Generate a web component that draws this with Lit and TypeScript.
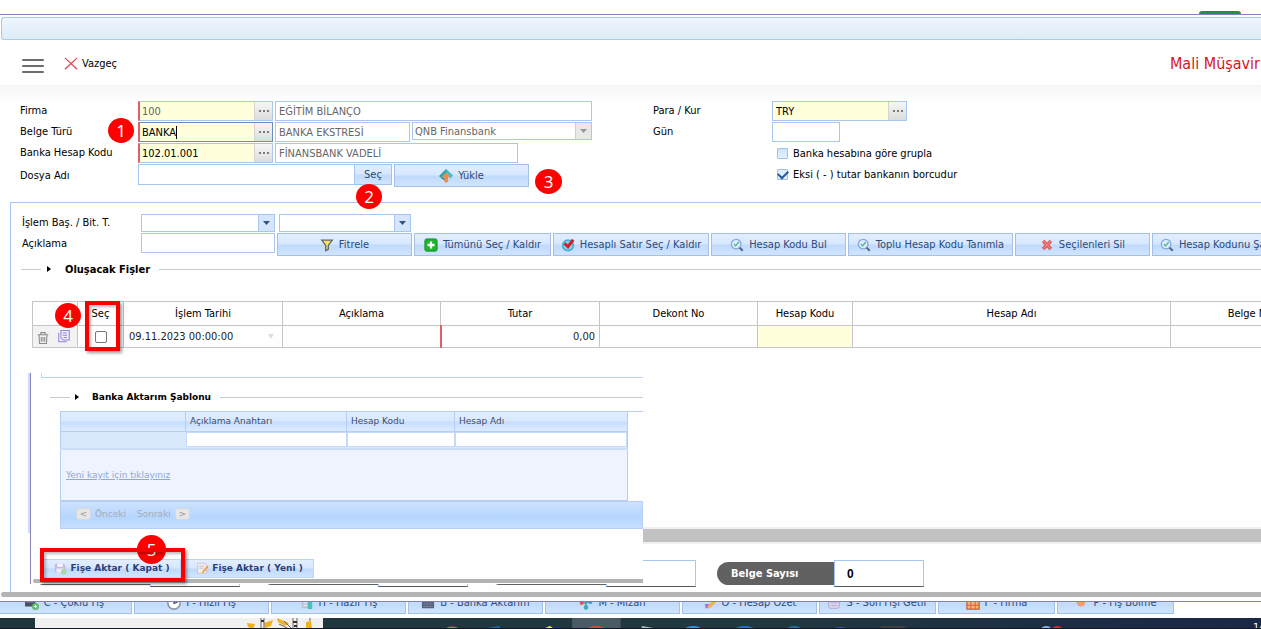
import { LitElement, html, css, svg, nothing, TemplateResult } from "lit";
import { customElement, property } from "lit/decorators.js";

const icons: Record<string, TemplateResult> = {
  cancel: svg`<path d="M1 1 15 14M15 1 1 14" stroke="#e0404c" stroke-width="1.3" fill="none"/>`,
  upload: svg`<path d="M8 0 11 3 5 9 4 12 0 8Z" fill="#2aa7ac"/><path d="M8 0 16 7 13 11 9 5Z" fill="#45c0c4"/><path d="M8 4 13 9H10.500V14Q8 17 6 14V9H3Z" fill="#f08a4b"/><path d="M4 11 6 9V13Z" fill="#157f8c"/>`,
  filter: svg`<path d="M2 2.500H14L9.500 8.500V13L6.500 14.500V8.500Z" fill="#fbe35a" stroke="#5f6672" stroke-width="1.500"/>`,
  plus: svg`<rect x="1" y="1" width="14" height="14" rx="2" fill="#1fb52c" stroke="#128a1d"/><path d="M8 4V12M4 8H12" stroke="#fff" stroke-width="2.600"/>`,
  check: svg`<circle cx="8" cy="8.500" r="7" fill="#3fb1d6"/><circle cx="8" cy="8.500" r="5" fill="#8fd3ea"/><path d="M4 6 8 10 14 2" stroke="#d0202c" stroke-width="3.400" fill="none"/>`,
  search: svg`<circle cx="7" cy="7" r="5.500" fill="#dcecff" stroke="#8aa6e0" stroke-width="1.500"/><path d="M4.500 7 6.500 9 10 4.500" stroke="#5fc08c" stroke-width="1.800" fill="none"/><path d="M11 11 14.500 14.500" stroke="#5c5f8c" stroke-width="2.400"/>`,
  remove: svg`<path d="M3.500 3.500 12.500 12.500M12.500 3.500 3.500 12.500" stroke="#e0584f" stroke-width="4"/><path d="M4 4 12 12M12 4 4 12" stroke="#f08078" stroke-width="1.500"/>`,
  trash: svg`<g fill="none" stroke="#8b8b8b" stroke-width="1.200"><path d="M2 5.500H14M5.500 5V3H10.500V5M3.500 6 4 15.400H12L12.500 6M6 8V13.500M8 8V13.500M10 8V13.500"/></g>`,
  copy: svg`<g fill="#f2f0ff" stroke="#8f86d8" stroke-width="1.200"><path d="M2 3V13.500H11"/><path d="M4.500 0.600H14V11.500H7L4.500 9Z"/><path d="M6.500 3.500H11.500M6.500 6H11.500M7.500 8.500H11.500"/></g>`,
  save: svg`<path d="M1 2H12L14 4V13H1Z" fill="#c8b8e2"/><rect x="4" y="2" width="7" height="4" fill="#f6f4fb"/><rect x="3" y="8" width="9" height="5" fill="#f1eef8"/><circle cx="12" cy="12" r="3.500" fill="#a6d9a4"/>`,
  edit: svg`<path d="M2 1.500H11L13 4V14H2Z" fill="#f3eee6" stroke="#c7bfd4"/><path d="M4 5H10M4 7.500H9" stroke="#b9b2ca"/><path d="M14 4 8 11 7 14 10 12.500 15.500 6Z" fill="#e0a950"/>`,
  multi: svg`<rect x="0" y="1" width="12" height="11" fill="#4a5160"/><path d="M2 4H10M2 7H10" stroke="#7f8796"/><circle cx="12" cy="12" r="4" fill="#5fb968"/><path d="M12 10V14M10 12H14" stroke="#fff"/>`,
  clock: svg`<circle cx="8" cy="8" r="7" fill="#fff" stroke="#8e97a6" stroke-width="1.800"/><path d="M8 3V8.500L12 7" stroke="#4c5666" stroke-width="1.400" fill="none"/>`,
  ready: svg`<rect x="2" y="5" width="8" height="9" fill="#b9c3cf"/><rect x="9" y="2" width="5" height="13" fill="#46c2c0"/><path d="M4 8H8M4 11H8" stroke="#fff"/>`,
  bank: svg`<rect x="1" y="2" width="14" height="12" rx="1" fill="#59627d"/><path d="M3 6H13M3 9H13M3 12H13" stroke="#8d95ad" stroke-dasharray="2 1"/>`,
  tree: svg`<path d="M3 8H8V14M8 8 12 6" stroke="#3b9aa8" stroke-width="1.600" fill="none"/><circle cx="3" cy="8" r="2.200" fill="#e05656"/><circle cx="8" cy="13" r="2.600" fill="#35b4a6"/><circle cx="13" cy="7" r="2.200" fill="#3a9ed0"/>`,
  pen: svg`<path d="M2 9H7L6 14H3Z" fill="#a976d0"/><path d="M12 4 15 7 8 14 5 12Z" fill="#f2b544"/><path d="M10 4 13 3 15 6Z" fill="#4fb78c"/>`,
  book: svg`<rect x="2" y="2" width="12" height="12" rx="2" fill="#e3dcf0" stroke="#a99cc8"/><path d="M4 8H12M4 11H12" stroke="#a99cc8"/>`,
  grid: svg`<rect x="1" y="1" width="14" height="14" fill="#f7b27c" stroke="#c8602a" stroke-width="1.400"/><path d="M1 6H15M1 10.500H15M5.500 1V15M10.500 1V15" stroke="#c8602a"/>`,
  dot: svg`<circle cx="8" cy="7" r="5" fill="#f1a066"/>`,
};

const icon = (name: string, size = 14) =>
  html`<svg class="icon" width=${size} height=${size} viewBox="0 0 16 16" aria-hidden="true">${icons[name]}</svg>`;

const shared = css`
  * { box-sizing: border-box; }
  input, button, select { font: inherit; color: inherit; margin: 0; border-radius: 0; outline: none; }
  .icon { flex: none; display: block; }
  .btn {
    display: flex; align-items: center; justify-content: center; gap: 5px; flex: none;
    height: 23px; padding: 0 4px; border: 1px solid #a3c0e8; color: #2d4a78; white-space: nowrap;
    background: linear-gradient(#e2eeff 0, #d6e7ff 48%, #c0dafb 52%, #d0e4ff 100%);
  }
  .legend { display: flex; align-items: center; font-weight: bold; color: #000; white-space: nowrap; }
  .legend::before { content: ""; width: 20px; border-top: 1px solid #c9c9c9; }
  .legend::after { content: ""; flex: 1; border-top: 1px solid #c9c9c9; margin-left: 9px; }
  .mark { width: 4px; height: 6px; margin: 0 14px 0 6px; background: #000; clip-path: polygon(0 0, 100% 50%, 0 100%); }
`;

@customElement("lookup-field")
class LookupField extends LitElement {
  @property() value = "";
  @property() label = "";
  @property({ type: Boolean }) required = false;
  @property({ type: Boolean }) active = false;
  @property({ type: Boolean }) muted = false;
  static styles = [shared, css`
    :host { display: block; width: 135px; flex: none; }
    .box { display: flex; height: 20px; border: 1px solid #a9c6ee; background: #ffffdc; }
    .required { border-left: 2px solid #e0606a; }
    .active { border-color: #6a8cc0; border-left-color: #e0606a; }
    .text { flex: 1; min-width: 0; border: 0; padding: 0 3px; background: none; }
    .required .text { padding: 0 2px; }
    .muted { color: #666; }
    .active .text { background: linear-gradient(#000, #000) 36px 3px / 1px 13px no-repeat; }
    .more {
      display: flex; align-items: center; justify-content: center; gap: 2px; width: 18px; padding: 0;
      border: 0; border-left: 1px solid #d4d4d4; background: linear-gradient(#f6f6f6, #dcdcdc);
    }
    .more i { width: 2px; height: 2px; background: #7a7a7a; }
  `];
  render() {
    return html`<div class="box ${this.required ? "required" : ""} ${this.active ? "active" : ""}">
      <input class="text ${this.muted ? "muted" : ""}" aria-label=${this.label} .value=${this.value} />
      <button class="more" aria-label="${this.label} ara"><i></i><i></i><i></i></button>
    </div>`;
  }
}

@customElement("template-window")
class TemplateWindow extends LitElement {
  static styles = [shared, css`
    :host {
      display: flex; flex-direction: column; height: 211px; background: #fefefe;
      border-left: 1px solid #8d86bb; font: 9px "DejaVu Sans", Verdana, sans-serif; color: #3c4d66;
    }
    .prev { flex: none; height: 5px; margin-left: 10px; border: solid #bcd5f6; border-width: 0 0 1px 1px; }
    .legend { flex: none; height: 20px; margin: 9px 0 4px 19px; }
    .legend .mark { margin: 0 13px 0 5px; }
    .body { margin-left: 29px; border-top: 1px solid #b4cff3; }
    .grid { width: 568px; border-collapse: collapse; table-layout: fixed; border: 1px solid #b4cff3; border-top: 0; background: #eef3ff; }
    .grid th {
      height: 19px; padding: 0 4px; text-align: left; font-weight: normal; border: 1px solid #b4cff3; border-top: 0;
      background: linear-gradient(#e0edff, #d8e8ff 48%, #c6ddff 52%, #dcebff);
    }
    .grid .filter td { height: 18px; padding: 0; background: #d9e8fd; border-bottom: 2px solid #c9def8; }
    .filter input { display: block; width: 100%; height: 15px; border: 1px solid #c3dafa; background: #fff; }
    .grid .empty { height: 51px; padding: 0 5px; }
    .grid a { color: #8ea8d3; }
    .c0 { width: 125px; } .c1 { width: 161px; } .c2 { width: 108px; }
    .pager {
      display: flex; align-items: center; gap: 4px; height: 28px; padding: 0 0 2px 15px; color: #a3abb8;
      border: 1px solid #b4cff3; background: linear-gradient(#cde2ff, #b6d6ff 60%, #c8dfff);
    }
    .step { display: flex; align-items: center; gap: 4px; border: 0; padding: 0; background: none; margin-right: 7px; }
    .knob { display: grid; place-items: center; width: 15px; height: 12px; border-radius: 3px; background: #e6e6e6; border: 1px solid #d3d8de; color: #999; }
    .actions { display: flex; gap: 4px; margin: 30px 0 0 12px; }
    .actions .btn { height: 19px; gap: 3px; font-weight: bold; color: #2d3f78; width: 138px; border-color: #bcd4f5; }
    .actions .second { width: 129px; }
    .scroll { flex: none; height: 4px; margin: 1px 0 0 2px; border-radius: 2px 0 0 2px; background: #b3b3b3; }
  `];
  render() {
    return html`
      <div class="prev"></div>
      <div class="legend"><span class="mark"></span>Banka Aktarım Şablonu</div>
      <div class="body">
        <table class="grid">
          <colgroup><col class="c0" /><col class="c1" /><col class="c2" /><col /></colgroup>
          <thead><tr><th></th><th>Açıklama Anahtarı</th><th>Hesap Kodu</th><th>Hesap Adı</th></tr></thead>
          <tbody>
            <tr class="filter"><td></td>
              ${["Açıklama Anahtarı", "Hesap Kodu", "Hesap Adı"].map((n) => html`<td><input aria-label=${n} /></td>`)}
            </tr>
            <tr><td class="empty" colspan="4"><a href="#">Yeni kayıt için tıklayınız</a></td></tr>
          </tbody>
        </table>
        <div class="pager">
          <button class="step"><span class="knob">&lt;</span>Önceki</button>
          <button class="step">Sonraki<span class="knob">&gt;</span></button>
        </div>
      </div>
      <div class="actions">
        <button class="btn">${icon("save", 13)}Fişe Aktar ( Kapat )</button>
        <button class="btn second">${icon("edit", 13)}Fişe Aktar ( Yeni )</button>
      </div>
      <div class="scroll"></div>`;
  }
}

const tools = [
  ["w135", "filter", "Fitrele"], ["w137", "plus", "Tümünü Seç / Kaldır"], ["w156", "check", "Hesaplı Satır Seç / Kaldır"],
  ["w135", "search", "Hesap Kodu Bul"], ["w165", "search", "Toplu Hesap Kodu Tanımla"], ["w135", "remove", "Seçilenleri Sil"],
  ["w173", "search", "Hesap Kodunu Şablona Ekle"],
];
const shortcuts = [
  ["w135", "multi", "C - Çoklu Fiş"], ["w135", "clock", "I - Hızlı Fiş"], ["w135", "ready", "H - Hazır Fiş"],
  ["w135", "bank", "B - Banka Aktarım"], ["w135", "tree", "M - Mizan"], ["w135", "pen", "O - Hesap Özet"],
  ["w117", "book", "S - Son Fişi Getir"], ["w117", "grid", "F - Firma"], ["w117", "dot", "P - Fiş Bölme"],
];

@customElement("app-root")
class AppRoot extends LitElement {
  static styles = [shared, css`
    :host {
      display: flex; flex-direction: column; position: relative; height: 100vh; overflow: hidden;
      background: #fefefe; color: #000; font: 11px "DejaVu Sans Condensed", Tahoma, "Noto Sans", sans-serif;
    }
    .strip { flex: none; display: flex; justify-content: flex-end; align-items: flex-end; height: 15px; padding-right: 20px; border-bottom: 1px solid #8a7fb8; }
    .tab { width: 42px; height: 3px; border-radius: 3px 3px 0 0; background: #1d9348; }
    .titlebar { flex: none; height: 23px; margin: 2px 0 0 1px; border: 1px solid #a9cbe6; border-right: 0; border-radius: 3px 0 0 3px; background: linear-gradient(#eff5fc, #dcecf6); }
    .header { flex: none; display: flex; align-items: center; height: 45px; padding: 2px 1px 0 22px; }
    .menu { display: flex; flex-direction: column; gap: 4px; width: 22px; padding: 0; border: 0; background: none; margin: 4px 20px 0 0; }
    .menu i { height: 2px; border-radius: 1px; background: #6c6c6c; }
    .cancel { display: flex; align-items: center; gap: 4px; padding: 0; border: 0; background: none; }
    .user { margin-left: auto; font-size: 16px; color: #d9151f; }
    .form { flex: none; display: grid; grid-template-columns: 633px 1fr; padding: 16px 0 14px 20px; background: linear-gradient(#f6f6f6, #fefefe 15px); }
    .col { display: grid; grid-auto-rows: 20px; gap: 1px; align-content: start; height: 87px; }
    .row { display: grid; grid-template-columns: 118px 1fr; }
    .row > label, .row > span { line-height: 20px; }
    .row > .tall { line-height: 23px; }
    .fields { display: flex; align-items: flex-start; gap: 2px; }
    .input { flex: none; height: 20px; padding: 0 3px; border: 1px solid #a9c6ee; background: #fff; }
    .ro { color: #666; }
    .w68 { width: 68px; } .w117 { width: 117px; } .w132 { width: 132px; } .w134 { width: 134px; } .w135 { width: 135px; } .w137 { width: 137px; }
    .w156 { width: 156px; } .w165 { width: 165px; } .w173 { width: 173px; } .w180 { width: 180px; } .w217 { width: 217px; } .w243 { width: 243px; } .w317 { width: 317px; }
    .combo { display: flex; flex: none; height: 18px; border: 1px solid #a9c6ee; background: #fff; }
    .combo select, .combo input { flex: 1; min-width: 0; appearance: none; border: 0; background: none; padding: 0 2px; }
    .combo select:disabled { color: #666; opacity: 1; }
    .drop { display: grid; place-items: center; width: 16px; padding: 0; border: 0; border-left: 1px solid #a9c6ee; background: #d4e5fc; }
    .drop::before { content: ""; width: 7px; height: 4px; background: #35527c; clip-path: polygon(0 0, 100% 0, 50% 100%); }
    .drop.off { background: #e8e8e8; border-color: #cfcfcf; }
    .drop.off::before { background: #999; }
    .file { display: flex; }
    .file .btn { width: 37px; height: 21px; border-left: 0; }
    .file .input { height: 21px; }
    .right .row { grid-template-columns: 119px 1fr; }
    .tick { display: flex; align-items: center; gap: 5px; padding-left: 124px; }
    .tick input { appearance: none; width: 11px; height: 11px; border: 1px solid #9fc3e8; border-radius: 1px; background: linear-gradient(#cfe4fa, #e3f1ff); }
    .tick input:checked { background: #e1effc; display: grid; place-items: center; }
    .tick input:checked::before { content: ""; width: 8px; height: 5px; margin-bottom: 3px; border: solid #235c96; border-width: 0 0 2px 2px; transform: rotate(-45deg); }
    .panel { flex: 1; min-height: 0; display: flex; flex-direction: column; margin-left: 10px; border: solid #a9c6ee; border-width: 1px 0 0 1px; }
    .search { display: grid; gap: 1px; padding: 11px 0 0 11px; }
    .search .row { grid-template-columns: 119px 1fr; }
    .search .row > label { line-height: 18px; }
    .search .row > .tall { line-height: 22px; }
    .search .pair { gap: 4px; }
    .panel > .legend { height: 26px; margin-left: 10px; }
    .data { border-collapse: collapse; table-layout: fixed; width: 1297px; margin: 19px 0 0 21px; }
    .data th, .data td { border: 1px solid #c6c6c6; font-weight: normal; padding: 0 5px; }
    .data th { height: 24px; }
    .data td { height: 22px; color: #222; }
    .data .tools { background: #f2f2f2; padding: 0 3px; }
    .toolset { display: flex; gap: 7px; }
    .toolset button { border: 0; padding: 0; background: none; }
    .data .need { background: #ffffdc; }
    .data .amount { text-align: right; border-left: 2px solid #e0606a; padding-right: 4px; }
    .data .pick { text-align: center; }
    .pick input { appearance: none; display: inline-block; width: 12px; height: 12px; margin: 1px 0 0; border: 1px solid #767676; border-radius: 2px; background: #fff; vertical-align: middle; }
    .date { display: flex; align-items: center; justify-content: space-between; padding-right: 3px; }
    .date::after { content: ""; width: 6px; height: 5px; background: #ddd; clip-path: polygon(0 0, 100% 0, 50% 100%); }
    .k0 { width: 45px; } .k1 { width: 46px; } .k2 { width: 159px; } .k3 { width: 158px; } .k6 { width: 95px; } .k7 { width: 318px; }
    .hscroll { flex: none; height: 17px; margin: auto 0 0 21px; padding: 2px 0; background: #f0f0f0; }
    .hscroll i { display: block; height: 13px; background: #c1c1c1; }
    .totals { flex: none; display: flex; align-items: center; gap: 21px; height: 27px; margin: 16px 0 5px 22px; font-weight: bold; }
    .total { display: flex; align-items: center; }
    .total label { width: 117px; height: 23px; padding-left: 14px; border-radius: 12px 0 0 12px; background: #616161; color: #fff; line-height: 24px; }
    .total input { width: 90px; height: 27px; padding: 0 12px; border: 1px solid #a9c6ee; border-bottom-color: #555; font: bold 12px "Liberation Sans", sans-serif; }
    .pagebar { flex: none; height: 9px; padding-bottom: 4px; }
    .pagebar i { display: block; height: 5px; margin-left: 1px; border-radius: 3px 0 0 3px; background: #b4b4b4; }
    .shortcuts { flex: none; height: 13px; overflow: hidden; border-top: 1px solid #7f7fb5; margin-bottom: 4px; display: flex; align-items: flex-end; }
    .keys { display: flex; gap: 2px; margin-left: -3px; }
    .taskbar { flex: none; display: flex; height: 11px; background: linear-gradient(90deg, #20363f, #22383f 60%, #1a2746); border-bottom: 1px solid #101828; color: #fff; overflow: hidden; }
    .find { width: 288px; margin-left: 35px; background: #f0f0f0; display: flex; justify-content: flex-end; padding-right: 8px; }
    .apps { flex: 1; display: block; min-width: 0; }
    .clock { font-size: 11px; line-height: 20px; height: 10px; width: 8px; white-space: nowrap; }
    .window { position: absolute; left: 30px; top: 373px; width: 613px; z-index: 1; }
    .edge { position: absolute; left: 28px; top: 373px; width: 2px; height: 160px; background: #c9defa; z-index: 1; }
    .box { position: absolute; border: 4px solid #f80000; box-shadow: 2px 2px 3px #0006, inset 2px 2px 3px #0004; z-index: 2; }
    .box4 { left: 85px; top: 301px; width: 35px; height: 50px; }
    .box5 { left: 40px; top: 548px; width: 145px; height: 34px; }
    .badge { position: absolute; display: grid; place-items: center; width: 26px; height: 25px; border-radius: 50%; background: #f00; color: #fff; font: 17px "Noto Sans", sans-serif; z-index: 3; }
    .b1 { left: 108px; top: 118px; } .b2 { left: 356px; top: 184px; } .b3 { left: 535px; top: 169px; width: 27px; } .b4 { left: 55px; top: 303px; }
    .b5 { left: 137px; top: 535px; width: 29px; height: 29px; z-index: 1; }
  `];

  render() {
    return html`
      <div class="strip"><span class="tab"></span></div>
      <div class="titlebar"></div>
      <header class="header">
        <button class="menu" aria-label="Menü"><i></i><i></i><i></i></button>
        <button class="cancel">${icon("cancel")}Vazgeç</button>
        <span class="user">Mali Müşavir</span>
      </header>
      <section class="form">
        <div class="col">
          <div class="row"><span>Firma</span><div class="fields">
            <lookup-field required muted label="Firma" value="100"></lookup-field>
            <input class="input ro w317" readonly aria-label="Firma adı" value="EĞİTİM BİLANÇO" /></div></div>
          <div class="row"><span>Belge Türü</span><div class="fields">
            <lookup-field required active label="Belge Türü" value="BANKA"></lookup-field>
            <input class="input ro w135" readonly aria-label="Belge adı" value="BANKA EKSTRESİ" />
            <div class="combo ro w180"><select disabled aria-label="Banka"><option>QNB Finansbank</option></select><button class="drop off" aria-label="Aç"></button></div></div></div>
          <div class="row"><span>Banka Hesap Kodu</span><div class="fields">
            <lookup-field required label="Banka Hesap Kodu" value="102.01.001"></lookup-field>
            <input class="input ro w243" readonly aria-label="Hesap adı" value="FİNANSBANK VADELİ" /></div></div>
          <div class="row"><label class="tall" for="file">Dosya Adı</label><div class="fields">
            <div class="file"><input id="file" class="input w217" /><button class="btn">Seç</button></div>
            <button class="btn w135">${icon("upload")}Yükle</button></div></div>
        </div>
        <div class="col right">
          <div class="row"><span>Para / Kur</span><lookup-field label="Para / Kur" value="TRY"></lookup-field></div>
          <div class="row"><label for="day">Gün</label><input id="day" class="input w68" /></div>
          <label class="tick"><input type="checkbox" />Banka hesabına göre grupla</label>
          <label class="tick"><input type="checkbox" checked />Eksi ( - ) tutar bankanın borcudur</label>
        </div>
      </section>
      <section class="panel">
        <div class="search">
          <div class="row"><label for="from">İşlem Baş. / Bit. T.</label><div class="fields pair">
            <div class="combo w134"><input id="from" /><button class="drop" aria-label="Takvim"></button></div>
            <div class="combo w132"><input aria-label="Bitiş tarihi" /><button class="drop" aria-label="Takvim"></button></div></div></div>
          <div class="row"><label class="tall" for="desc">Açıklama</label><div class="fields">
            <input id="desc" class="input w134" />
            ${tools.map(([w, i, t]) => html`<button class="btn ${w}">${icon(i)}${t}</button>`)}</div></div>
        </div>
        <div class="legend"><span class="mark"></span>Oluşacak Fişler</div>
        <table class="data">
          <colgroup>${[0, 1, 2, 3, 2, 3, 6, 7, 2].map((k) => html`<col class="k${k}" />`)}</colgroup>
          <thead><tr>${["", "Seç", "İşlem Tarihi", "Açıklama", "Tutar", "Dekont No", "Hesap Kodu", "Hesap Adı", "Belge No"].map((t) => html`<th>${t || nothing}</th>`)}</tr></thead>
          <tbody><tr>
            <td class="tools"><div class="toolset"><button aria-label="Sil">${icon("trash")}</button><button aria-label="Kopyala">${icon("copy")}</button></div></td>
            <td class="pick"><input type="checkbox" aria-label="Seç" /></td>
            <td><div class="date">09.11.2023 00:00:00</div></td>
            <td></td><td class="amount">0,00</td><td></td><td class="need"></td><td></td><td></td>
          </tr></tbody>
        </table>
        <div class="hscroll"><i></i></div>
        <div class="totals">
          ${["", "", "", "Belge Sayısı"].map((t, n) => html`<div class="total"><label for="t${n}">${t}</label><input id="t${n}" readonly .value=${t ? "0" : ""} /></div>`)}
        </div>
      </section>
      <div class="pagebar"><i></i></div>
      <nav class="shortcuts"><div class="keys">${shortcuts.map(([w, i, t]) => html`<button class="btn ${w}">${icon(i)}${t}</button>`)}</div></nav>
      <footer class="taskbar">
        <div class="find"><svg width="68" height="11" viewBox="0 0 68 11" aria-hidden="true">
          <g fill="#efb021"><path d="M0 5 8 6 6 11 1 9ZM17 5 26 2 24 8 18 10ZM30 0 42 5 38 8 31 4ZM59 4 64 3 65 11H59Z"/></g>
          <g stroke="#74665a" fill="none"><path d="M14 0V11M17 0V11M46 0V11M50 0V11M63 0V3M32 6 42 11M37 3 45 11"/></g><path d="M14 3H17M46 4H50M47 8H50" stroke="#3b322c" stroke-width="2"/>
        </svg></div>
        <svg class="apps" height="10" viewBox="323 0 922 10" preserveAspectRatio="xMinYMin slice" aria-hidden="true">
          <rect x="570" width="48" height="10" fill="#4b5b65"/>
          <path d="M543 10 548 8 551 10Z" fill="#f2e83a"/><path d="M485 10 498 8V10Z" fill="#1769b5"/>
          <ellipse cx="451" cy="11" rx="6" ry="2.500" fill="#ea5b5b"/><ellipse cx="594" cy="12" rx="9" ry="4" fill="#ea4335"/>
          <path d="M639 10V8L651 10Z" fill="#b8c0c4"/><ellipse cx="690" cy="11" rx="8" ry="3" fill="#17a3e0"/>
          <ellipse cx="741" cy="12" rx="10" ry="4" fill="#2869ee"/><ellipse cx="790" cy="11" rx="7" ry="3" fill="#1f6fa5"/>
          <ellipse cx="836" cy="12" rx="8" ry="3" fill="#3355b8"/><rect x="876" y="8" width="24" height="2" fill="#45403f"/>
          <ellipse cx="1040" cy="11" rx="5" ry="3" fill="#90aee8"/><ellipse cx="1051" cy="11" rx="5" ry="3" fill="#d02c28"/>
        </svg>
        <span class="clock">14</span>
      </footer>
      <span class="edge"></span>
      <template-window class="window"></template-window>
      <span class="box box4"></span><span class="box box5"></span>
      ${[1, 2, 3, 4, 5].map((n) => html`<span class="badge b${n}">${n}</span>`)}`;
  }
}
